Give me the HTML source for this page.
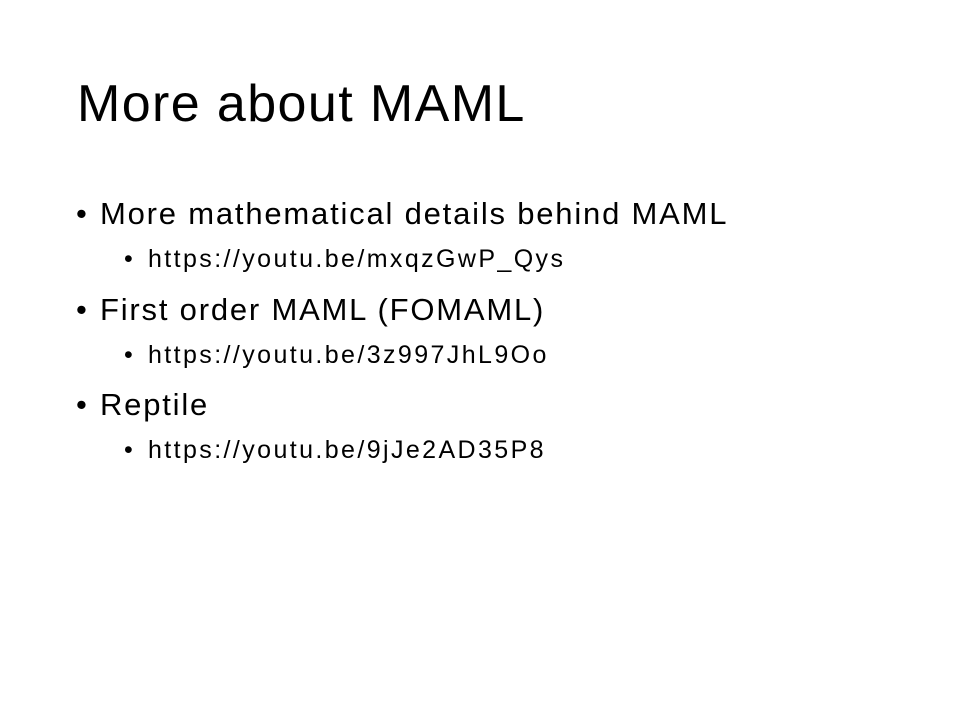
<!DOCTYPE html>
<html><head><meta charset="utf-8"><style>
html,body{margin:0;padding:0;background:#fff;}
body{width:960px;height:720px;position:relative;overflow:hidden;font-family:"Liberation Sans",Arial,sans-serif;color:#000;}
.t{position:absolute;white-space:nowrap;line-height:1;}
.title{left:77px;top:78px;font-size:52px;letter-spacing:1.4px;}
.l1{font-size:31px;letter-spacing:1.8px;}
.l2{font-size:25px;letter-spacing:2.4px;}
.b{letter-spacing:0;}
</style></head><body>
<div class="t title">More about MAML</div>

<div class="t l1 b" style="left:76px;top:198px">•</div>
<div class="t l1" style="left:100px;top:198px">More mathematical details behind MAML</div>
<div class="t l2 b" style="left:124px;top:247px">•</div>
<div class="t l2" style="left:148px;top:247px">https://youtu.be/mxqzGwP_Qys</div>

<div class="t l1 b" style="left:76px;top:294px">•</div>
<div class="t l1" style="left:100px;top:294px">First order MAML (FOMAML)</div>
<div class="t l2 b" style="left:124px;top:343px">•</div>
<div class="t l2" style="left:148px;top:343px">https://youtu.be/3z997JhL9Oo</div>

<div class="t l1 b" style="left:76px;top:389px">•</div>
<div class="t l1" style="left:100px;top:389px">Reptile</div>
<div class="t l2 b" style="left:124px;top:438px">•</div>
<div class="t l2" style="left:148px;top:438px">https://youtu.be/9jJe2AD35P8</div>
</body></html>
